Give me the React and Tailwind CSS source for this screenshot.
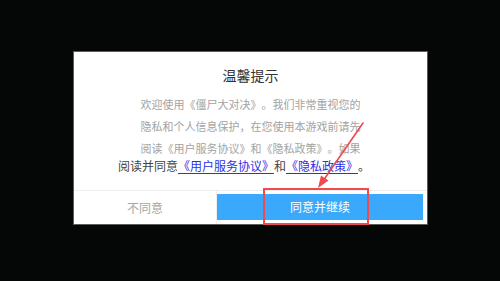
const cjk = { fontFamily: '"Noto Sans CJK SC", "Noto Sans", sans-serif' };

const bodyLines = [
  "欢迎使用《僵尸大对决》。我们非常重视您的",
  "隐私和个人信息保护，在您使用本游戏前请先",
  "阅读《用户服务协议》和《隐私政策》。如果",
];

export default function App() {
  return (
    <div
      className="relative h-[281px] w-[500px] overflow-hidden bg-[#050606] pl-[73px] pt-[51px] [text-spacing-trim:space-all]"
      style={cjk}
    >
      <div className="flex h-[174px] w-[355px] flex-col border border-[#5c5c5c] bg-white">
        <div className="mt-[13px] text-center text-[14px] leading-[20px] text-[#333]">温馨提示</div>

        <div className="mt-[8px] text-center text-[11px] leading-[22px] text-[#a3a3a3]">
          {bodyLines.map((line) => (
            <div key={line} className="whitespace-nowrap">
              {line}
            </div>
          ))}
        </div>

        <div className="whitespace-nowrap pr-[13px] text-center text-[12px] leading-[14px] text-[#444]">
          阅读并同意
          <span className="text-[#2f2fe6] underline underline-offset-2">《用户服务协议》</span>
          和
          <span className="text-[#2f2fe6] underline underline-offset-2">《隐私政策》</span>。
        </div>

        <div className="mt-auto flex h-[34px] border-t border-[#eeeeee]">
          <button
            type="button"
            className="flex w-[143px] items-center justify-center border-r border-[#eeeeee] text-[12px] text-[#a5a5a5]"
          >
            不同意
          </button>
          <div className="flex flex-1 pb-[4px] pr-[4px] pt-[3px]">
            <button
              type="button"
              className="flex flex-1 items-center justify-center bg-[#3aa9fb] text-[12px] text-white"
            >
              同意并继续
            </button>
          </div>
        </div>
      </div>

      <div className="absolute left-[263px] top-[188px] h-[37px] w-[106px] border-2 border-[#ef4a4d]" />

      <svg className="absolute left-0 top-0" width="500" height="281" viewBox="0 0 500 281">
        <line x1="363" y1="123" x2="323" y2="181" stroke="#ef4a4d" strokeWidth="1.6" strokeLinecap="round" />
        <polygon points="318,188 321,175.5 328.5,180.5" fill="#ef4a4d" />
      </svg>
    </div>
  );
}
